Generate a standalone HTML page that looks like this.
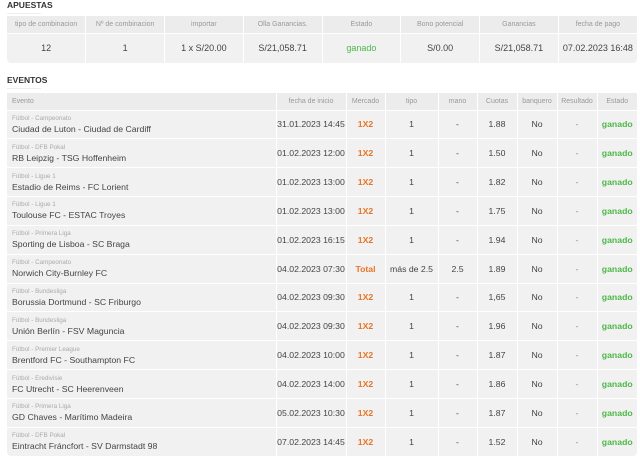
<!DOCTYPE html>
<html><head><meta charset="utf-8"><style>
*{margin:0;padding:0;box-sizing:border-box}
body{width:640px;height:462px;background:#fff;font-family:"Liberation Sans",sans-serif;color:#333;position:relative;overflow:hidden}
.h{position:absolute;left:7px;font-weight:bold;font-size:8.5px;color:#333}
.h:after{content:"";position:absolute;left:0;top:13px;width:34px;height:1px;background:#eee}
table{position:absolute;left:7px;width:630px;border-collapse:collapse;table-layout:fixed;background:#f1f1f1;border-radius:4px}
td,th{border:1px solid #fff;text-align:center;font-weight:normal;white-space:nowrap;overflow:hidden}
th{font-size:7px;color:#999;height:17px;background:#ececec}
table tr:first-child th{border-top:none}
table tr td:first-child,table tr th:first-child{border-left:none}
table tr td:last-child,table tr th:last-child{border-right:none}
table tr:last-child td{border-bottom:none}
#t1 td{height:30px;font-size:9px;color:#444}
#t2 td{height:28.85px;font-size:8.7px;color:#444}
.ev{text-align:left;padding-left:5px}
.lg{font-size:6.3px;color:#aaa;display:block;margin-bottom:2px}
#t1 td.g,#t2 td.g{color:#4cb848}
#t2 td.gb{color:#4cb848;font-weight:bold}
#t2 td.o{color:#e8742a;font-weight:bold}
</style></head><body>
<div class="h" style="top:0px">APUESTAS</div>
<table id="t1" style="top:16px">
<tr><th>tipo de combinacion</th><th>Nº de combinacion</th><th>importar</th><th>Olla Ganancias.</th><th>Estado</th><th>Bono potencial</th><th>Ganancias</th><th>fecha de pago</th></tr>
<tr><td>12</td><td>1</td><td>1 x S/20.00</td><td>S/21,058.71</td><td class="g">ganado</td><td>S/0.00</td><td>S/21,058.71</td><td>07.02.2023 16:48</td></tr>
</table>
<div class="h" style="top:75px">EVENTOS</div>
<table id="t2" style="top:93px">
<colgroup><col style="width:269px"><col style="width:70px"><col style="width:39px"><col style="width:53px"><col style="width:39px"><col style="width:40px"><col style="width:40px"><col style="width:40px"><col style="width:40px"></colgroup>
<tr><th style="text-align:left;padding-left:5px">Evento</th><th>fecha de inicio</th><th>Mercado</th><th>tipo</th><th>mano</th><th>Cuotas</th><th>banquero</th><th>Resultado</th><th>Estado</th></tr>
<tr><td class="ev"><span class="lg">Fútbol - Campeonato</span>Ciudad de Luton - Ciudad de Cardiff</td><td>31.01.2023 14:45</td><td class="o">1X2</td><td>1</td><td>-</td><td>1.88</td><td>No</td><td class="g">-</td><td class="gb">ganado</td></tr>
<tr><td class="ev"><span class="lg">Fútbol - DFB Pokal</span>RB Leipzig - TSG Hoffenheim</td><td>01.02.2023 12:00</td><td class="o">1X2</td><td>1</td><td>-</td><td>1.50</td><td>No</td><td class="g">-</td><td class="gb">ganado</td></tr>
<tr><td class="ev"><span class="lg">Fútbol - Ligue 1</span>Estadio de Reims - FC Lorient</td><td>01.02.2023 13:00</td><td class="o">1X2</td><td>1</td><td>-</td><td>1.82</td><td>No</td><td class="g">-</td><td class="gb">ganado</td></tr>
<tr><td class="ev"><span class="lg">Fútbol - Ligue 1</span>Toulouse FC - ESTAC Troyes</td><td>01.02.2023 13:00</td><td class="o">1X2</td><td>1</td><td>-</td><td>1.75</td><td>No</td><td class="g">-</td><td class="gb">ganado</td></tr>
<tr><td class="ev"><span class="lg">Fútbol - Primera Liga</span>Sporting de Lisboa - SC Braga</td><td>01.02.2023 16:15</td><td class="o">1X2</td><td>1</td><td>-</td><td>1.94</td><td>No</td><td class="g">-</td><td class="gb">ganado</td></tr>
<tr><td class="ev"><span class="lg">Fútbol - Campeonato</span>Norwich City-Burnley FC</td><td>04.02.2023 07:30</td><td class="o">Total</td><td>más de 2.5</td><td>2.5</td><td>1.89</td><td>No</td><td class="g">-</td><td class="gb">ganado</td></tr>
<tr><td class="ev"><span class="lg">Fútbol - Bundesliga</span>Borussia Dortmund - SC Friburgo</td><td>04.02.2023 09:30</td><td class="o">1X2</td><td>1</td><td>-</td><td>1,65</td><td>No</td><td class="g">-</td><td class="gb">ganado</td></tr>
<tr><td class="ev"><span class="lg">Fútbol - Bundesliga</span>Unión Berlín - FSV Maguncia</td><td>04.02.2023 09:30</td><td class="o">1X2</td><td>1</td><td>-</td><td>1.96</td><td>No</td><td class="g">-</td><td class="gb">ganado</td></tr>
<tr><td class="ev"><span class="lg">Fútbol - Premier League</span>Brentford FC - Southampton FC</td><td>04.02.2023 10:00</td><td class="o">1X2</td><td>1</td><td>-</td><td>1.87</td><td>No</td><td class="g">-</td><td class="gb">ganado</td></tr>
<tr><td class="ev"><span class="lg">Fútbol - Eredivisie</span>FC Utrecht - SC Heerenveen</td><td>04.02.2023 14:00</td><td class="o">1X2</td><td>1</td><td>-</td><td>1.86</td><td>No</td><td class="g">-</td><td class="gb">ganado</td></tr>
<tr><td class="ev"><span class="lg">Fútbol - Primera Liga</span>GD Chaves - Marítimo Madeira</td><td>05.02.2023 10:30</td><td class="o">1X2</td><td>1</td><td>-</td><td>1.87</td><td>No</td><td class="g">-</td><td class="gb">ganado</td></tr>
<tr><td class="ev"><span class="lg">Fútbol - DFB Pokal</span>Eintracht Fráncfort - SV Darmstadt 98</td><td>07.02.2023 14:45</td><td class="o">1X2</td><td>1</td><td>-</td><td>1.52</td><td>No</td><td class="g">-</td><td class="gb">ganado</td></tr>
</table>
</body></html>
